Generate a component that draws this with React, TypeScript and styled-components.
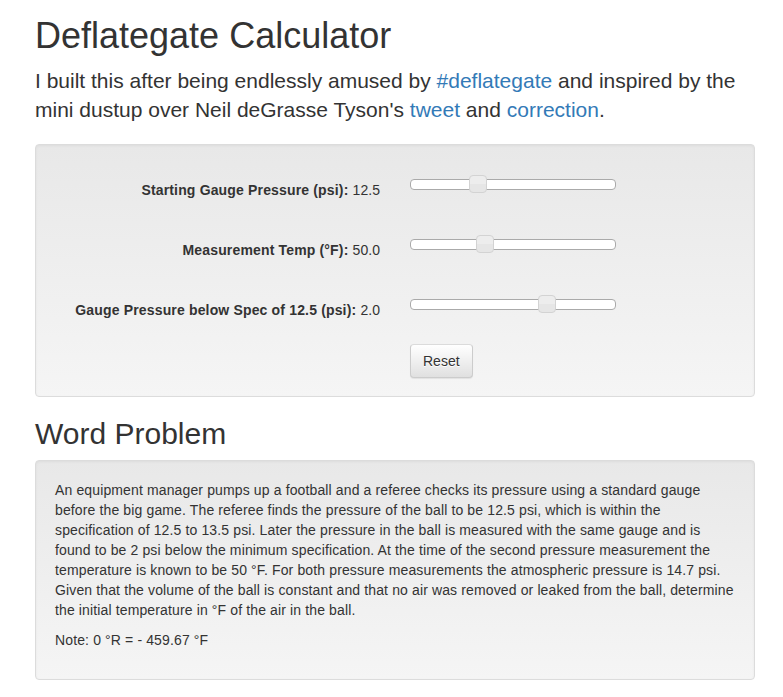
import React from "react";
import styled, { createGlobalStyle } from "styled-components";

const Global = createGlobalStyle`
  html, body { margin: 0; padding: 0; background: #fff; }
  body {
    font-family: "Liberation Sans", Arial, Helvetica, sans-serif;
    font-size: 14px;
    line-height: 1.42857143;
    color: #333;
  }
  * { box-sizing: border-box; }
`;

const Container = styled.div`
  width: 720px;
  margin-left: 35px;
  padding-top: 16px;
`;

const Title = styled.h1`
  font-size: 36px;
  font-weight: 500;
  line-height: 1.1;
  margin: 0 0 10px;
  color: #333;
`;

const Lead = styled.p`
  font-size: 21px;
  font-weight: 300;
  line-height: 1.4;
  margin: 0 0 20px;
`;

const Link = styled.a`
  color: #337ab7;
  text-decoration: none;
`;

const Well = styled.div`
  min-height: 20px;
  padding: 19px;
  margin-bottom: 20px;
  border: 1px solid #dcdcdc;
  border-radius: 4px;
  background-image: linear-gradient(to bottom, #e8e8e8 0, #f5f5f5 100%);
  box-shadow: inset 0 1px 3px rgba(0, 0, 0, 0.05), 0 1px 0 rgba(255, 255, 255, 0.1);
`;

const FormRow = styled.div<{ $first?: boolean }>`
  display: flex;
  align-items: flex-start;
  gap: 30px;
  margin-top: ${(p) => (p.$first ? 14 : 40)}px;
  height: 20px;
`;

const Label = styled.label`
  width: 325px;
  padding-top: 2px;
  text-align: right;
  font-weight: 700;
  line-height: 20px;
  letter-spacing: 0.16px;
  white-space: nowrap;
`;

const Value = styled.span`
  font-weight: 400;
  letter-spacing: 0.05px;
`;

const Track = styled.div`
  position: relative;
  width: 206px;
  height: 11px;
  margin-top: 1px;
  background: #fff;
  border: 1px solid #aaa;
  border-radius: 4px;
`;

const Handle = styled.span`
  position: absolute;
  top: -5px;
  width: 18px;
  height: 18px;
  margin-left: -9px;
  border: 1px solid #d3d3d3;
  border-radius: 4px;
  background: linear-gradient(to bottom, #ededed 0, #ededed 50%, #e6e6e6 50%, #e6e6e6 100%);
`;

const ButtonRow = styled.div`
  padding-left: 355px;
  margin-top: 26px;
  margin-bottom: -1px;
`;

const Button = styled.button`
  display: inline-block;
  height: 34px;
  padding: 6px 12px;
  font-family: inherit;
  font-size: 14px;
  line-height: 20px;
  color: #333;
  border: 1px solid #ccc;
  border-color: #dbdbdb #ccc #ccc;
  border-radius: 4px;
  background-image: linear-gradient(to bottom, #fff 0, #e0e0e0 100%);
  text-shadow: 0 1px 0 #fff;
  box-shadow: inset 0 1px 0 rgba(255, 255, 255, 0.15), 0 1px 1px rgba(0, 0, 0, 0.075);
  cursor: pointer;
`;

const Subtitle = styled.h2`
  font-size: 30px;
  font-weight: 500;
  line-height: 1.1;
  margin: 0 0 10px;
`;

const Para = styled.p`
  margin: 0 0 10px;
  letter-spacing: 0.13px;
  white-space: nowrap;
`;

const sliders = [
  { label: "Starting Gauge Pressure (psi):", value: "12.5", pct: 33 },
  { label: "Measurement Temp (°F):", value: "50.0", pct: 36.5 },
  { label: "Gauge Pressure below Spec of 12.5 (psi):", value: "2.0", pct: 66.5 },
];

const problemLines = [
  "An equipment manager pumps up a football and a referee checks its pressure using a standard gauge",
  "before the big game. The referee finds the pressure of the ball to be 12.5 psi, which is within the",
  "specification of 12.5 to 13.5 psi. Later the pressure in the ball is measured with the same gauge and is",
  "found to be 2 psi below the minimum specification. At the time of the second pressure measurement the",
  "temperature is known to be 50 °F. For both pressure measurements the atmospheric pressure is 14.7 psi.",
  "Given that the volume of the ball is constant and that no air was removed or leaked from the ball, determine",
  "the initial temperature in °F of the air in the ball.",
];

export default function App() {
  return (
    <>
      <Global />
      <Container>
        <Title>Deflategate Calculator</Title>
        <Lead>
          I built this after being endlessly amused by <Link href="#">#deflategate</Link> and
          inspired by the mini dustup over Neil deGrasse Tyson's <Link href="#">tweet</Link> and{" "}
          <Link href="#">correction</Link>.
        </Lead>
        <Well>
          {sliders.map((s, i) => (
            <FormRow key={s.label} $first={i === 0}>
              <Label>
                {s.label} <Value>{s.value}</Value>
              </Label>
              <Track>
                <Handle style={{ left: `${s.pct}%` }} />
              </Track>
            </FormRow>
          ))}
          <ButtonRow>
            <Button>Reset</Button>
          </ButtonRow>
        </Well>
        <Subtitle>Word Problem</Subtitle>
        <Well>
          <Para>
            {problemLines.map((line, i) => (
              <React.Fragment key={i}>
                {line}
                {i < problemLines.length - 1 && <br />}
              </React.Fragment>
            ))}
          </Para>
          <Para>Note: 0 °R = - 459.67 °F</Para>
        </Well>
      </Container>
    </>
  );
}
